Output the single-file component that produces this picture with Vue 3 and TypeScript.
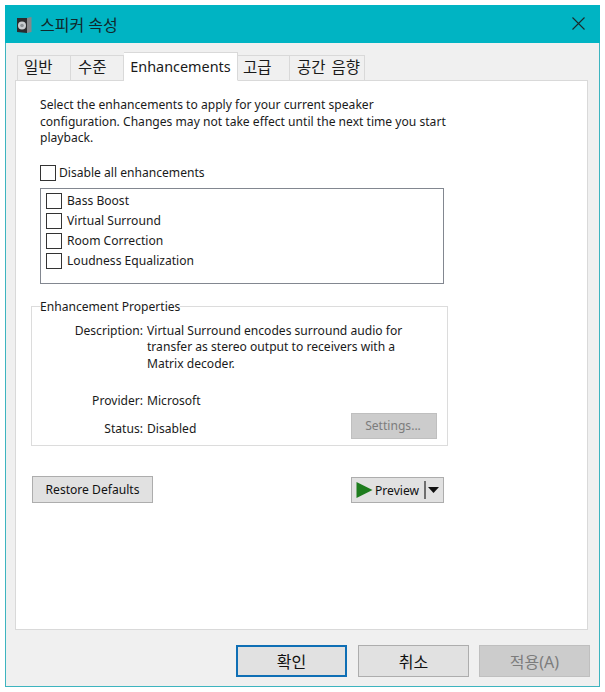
<script setup lang="ts">
interface TabItem {
  label: string
  active?: boolean
}

const tabs: TabItem[] = [
  { label: '일반' },
  { label: '수준' },
  { label: 'Enhancements', active: true },
  { label: '고급' },
  { label: '공간 음향' },
]

const enhancements: string[] = ['Bass Boost', 'Virtual Surround', 'Room Correction', 'Loudness Equalization']
</script>

<template>
  <div class="window">
    <header class="titlebar">
      <svg class="app-icon" width="16" height="18" viewBox="0 0 16 18" aria-hidden="true">
        <path d="M11 2 L15.5 1 L15.5 16 L11 17 Z" fill="#85878a" />
        <path d="M1 2 L11 2 L11 17 L1 16 Z" fill="#2a2c2e" />
        <circle cx="6" cy="9.5" r="4" fill="#c9cdd0" />
        <circle cx="6" cy="9.5" r="1.8" fill="#8e9397" />
      </svg>
      <span class="title">스피커 속성</span>
      <svg class="close" width="13" height="13" viewBox="0 0 13 13" aria-label="닫기">
        <path d="M0.5 0.5 L12.5 12.5 M12.5 0.5 L0.5 12.5" stroke="#1a2a2c" stroke-width="1.1" fill="none" />
      </svg>
    </header>

    <div class="body">
      <nav class="tabs">
        <div v-for="tab in tabs" :key="tab.label" class="tab" :class="{ active: tab.active }">{{ tab.label }}</div>
      </nav>

      <main class="page">
        <p class="intro">
          Select the enhancements to apply for your current speaker<br />
          configuration. Changes may not take effect until the next time you start<br />
          playback.
        </p>

        <label class="check disable-all">
          <span class="box"></span>
          <span>Disable all enhancements</span>
        </label>

        <ul class="list">
          <li v-for="item in enhancements" :key="item" class="check">
            <span class="box"></span>
            <span>{{ item }}</span>
          </li>
        </ul>

        <fieldset class="props">
          <legend>Enhancement Properties</legend>
          <div class="prop-row desc">
            <span class="prop-label">Description:</span>
            <span>Virtual Surround encodes surround audio for<br />transfer as stereo output to receivers with a<br />Matrix decoder.</span>
          </div>
          <div class="prop-row provider">
            <span class="prop-label">Provider:</span>
            <span>Microsoft</span>
          </div>
          <div class="prop-row status">
            <span class="prop-label">Status:</span>
            <span>Disabled</span>
            <button type="button" class="btn settings" disabled>Settings...</button>
          </div>
        </fieldset>

        <div class="actions">
          <button type="button" class="btn restore">Restore Defaults</button>
          <div class="btn preview">
            <svg width="17" height="16" viewBox="0 0 17 16" aria-hidden="true">
              <path d="M0.5 0 L16.5 8 L0.5 16 Z" fill="#1e7d1e" />
            </svg>
            <span class="preview-label">Preview</span>
            <span class="divider"></span>
            <svg width="11" height="6" viewBox="0 0 11 6" aria-hidden="true">
              <path d="M0 0 H11 L5.5 6 Z" fill="#111" />
            </svg>
          </div>
        </div>
      </main>

      <footer class="footer">
        <button type="button" class="btn dlg primary">확인</button>
        <button type="button" class="btn dlg">취소</button>
        <button type="button" class="btn dlg" disabled>적용(A)</button>
      </footer>
    </div>
  </div>
</template>

<style>
html,
body {
  margin: 0;
  background: #ffffff;
}
</style>

<style scoped>
.window {
  box-sizing: border-box;
  width: 595px;
  height: 682px;
  margin: 5px 0 0 5px;
  border: 1px solid #3db4bf;
  border-top: 0;
  background: #f0f0f0;
  font-family: "Noto Sans", "Noto Sans CJK KR", sans-serif;
  font-size: 12.1px;
  color: #1a1a1a;
  display: flex;
  flex-direction: column;
}

.titlebar {
  height: 38px;
  flex: none;
  background: #00b4c3;
  display: flex;
  align-items: center;
  padding: 0 15px 0 11px;
  margin: 0 -1px;
}

.app-icon {
  margin-top: 1px;
}

.title {
  margin-left: 8px;
  font-size: 16px;
  color: #10282b;
}

.close {
  margin-left: auto;
  margin-top: -1px;
}

.body {
  flex: 1;
  display: flex;
  flex-direction: column;
  padding: 10px 9px 0;
}

.tabs {
  display: flex;
  height: 28px;
  padding-left: 2px;
  align-items: flex-end;
  position: relative;
  z-index: 1;
  margin-bottom: -1px;
}

.tab {
  box-sizing: border-box;
  height: 26px;
  padding: 0 0 0 6px;
  border: 1px solid #d9d9d9;
  border-left-width: 0;
  background: #f0f0f0;
  font-size: 15.5px;
  line-height: 23px;
  white-space: nowrap;
}

.tab:first-child {
  border-left-width: 1px;
  width: 54px;
}

.tab:nth-child(2) {
  width: 53px;
  padding-left: 7px;
}

.tab:nth-child(4) {
  width: 52px;
  padding-left: 5px;
}

.tab:nth-child(5) {
  width: 75px;
  padding-left: 7px;
  word-spacing: 2px;
}

.tab.active {
  width: 114px;
  height: 29px;
  padding: 0;
  text-align: center;
  background: #ffffff;
  border-bottom-color: #ffffff;
  font-size: 14.4px;
  line-height: 27px;
}

.page {
  box-sizing: border-box;
  width: 573px;
  height: 550px;
  flex: none;
  background: #ffffff;
  border: 1px solid #d9d9d9;
  padding: 16px 15px 0;
}

.intro {
  margin: 0 0 0 9px;
  line-height: 16.5px;
}

.check {
  display: flex;
  align-items: center;
  gap: 4px;
  height: 20px;
}

.box {
  box-sizing: border-box;
  width: 16px;
  height: 16px;
  border: 1px solid #333333;
  background: #ffffff;
  flex: none;
}

.disable-all {
  margin: 16px 0 0 9px;
  gap: 3px;
}

.list {
  box-sizing: border-box;
  list-style: none;
  width: 404px;
  height: 96px;
  margin: 5px 0 0 9px;
  padding: 2px 5px;
  border: 1px solid #828790;
}

.list .check {
  gap: 5px;
}

.props {
  box-sizing: border-box;
  width: 417px;
  height: 148px;
  margin: 14px 0 0;
  padding: 0;
  border: 1px solid #dcdcdc;
  min-inline-size: 0;
}

.props legend {
  margin-left: 8px;
  padding: 0;
}

.prop-row {
  display: flex;
  line-height: 16.5px;
}

.prop-label {
  width: 111px;
  margin-right: 4px;
  text-align: right;
  flex: none;
}

.desc {
  margin-top: 8px;
}

.provider {
  margin-top: 20.5px;
}

.status {
  margin-top: 11.5px;
  position: relative;
}

.btn {
  box-sizing: border-box;
  font: inherit;
  color: #111111;
  background: #e1e1e1;
  border: 1px solid #adadad;
  padding: 0;
}

.btn:disabled {
  background: #cccccc;
  border-color: #bfbfbf;
  color: #7c7c7c;
}

.settings {
  width: 86px;
  height: 26px;
  margin-left: auto;
  margin-right: 10px;
  margin-top: -8px;
  padding: 2px 2px 0 0;
}

.actions {
  display: flex;
  justify-content: space-between;
  align-items: flex-end;
  width: 412px;
  margin: 30px 0 0 1px;
}

.restore {
  width: 121px;
  height: 27px;
}

.preview {
  width: 93px;
  height: 26px;
  display: flex;
  align-items: center;
  padding: 0 3px 0 4px;
}

.preview-label {
  margin-left: 2px;
  padding-top: 1px;
}

.divider {
  width: 2px;
  height: 18px;
  margin: 0 2px 0 5px;
  background: #6f6f6f;
}

.footer {
  display: flex;
  justify-content: flex-end;
  gap: 11px;
  margin-top: 15px;
}

.dlg {
  width: 111px;
  height: 32px;
  font-size: 16px;
}

.primary {
  border: 2px solid #0f6fb5;
}

.dlg:disabled {
  margin-left: -1px;
}
</style>
